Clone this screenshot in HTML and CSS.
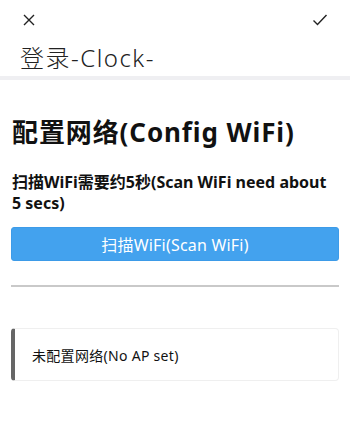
FILE: index.html
```html
<!DOCTYPE html>
<html lang="zh">
<head>
<meta charset="utf-8">
<link rel="stylesheet" href="styles.css">
</head>
<body>
<header class="app-header">
  <div class="toolbar">
    <svg class="icon" width="14" height="14" viewBox="0 0 14 14"><path d="M2 2 L12 12 M12 2 L2 12" stroke="#222" stroke-width="1.4" fill="none"/></svg>
    <svg class="icon" width="16" height="14" viewBox="0 0 16 14"><path d="M1.5 7.5 L5.5 11.5 L14.5 2" stroke="#222" stroke-width="1.4" fill="none"/></svg>
  </div>
  <div class="title">登录-Clock-</div>
</header>
<div class="header-bar"></div>
<main class="content">
  <h1 class="heading">配置网络(Config WiFi)</h1>
  <p class="hint">扫描WiFi需要约5秒(Scan WiFi need about 5 secs)</p>
  <button class="scan-btn">扫描WiFi(Scan WiFi)</button>
  <hr class="sep">
  <div class="notice">未配置网络(No AP set)</div>
</main>
</body>
</html>
```
FILE: styles.css
```css
* { box-sizing: border-box; }
body {
  margin: 0;
  background: #fff;
  font-family: "Noto Sans", "Noto Sans CJK SC", sans-serif;
  color: #111;
}
.toolbar {
  height: 40px;
  display: flex;
  align-items: center;
  justify-content: space-between;
  padding: 0 22px 0 22px;
}
.title {
  font-size: 24px;
  font-weight: 300;
  padding-left: 20px;
  line-height: 36px;
  letter-spacing: 1.5px;
  color: #222;
}
.header-bar {
  height: 4px;
  background: #efeff2;
}
.content {
  padding: 0 11px;
}
.heading {
  margin: 34px 0 0 1px;
  font-size: 26px;
  font-weight: 700;
  line-height: 36px;
  letter-spacing: 0.9px;
}
.hint {
  margin: 22px 0 0 1px;
  font-size: 16px;
  font-weight: 700;
  line-height: 21px;
}
.scan-btn {
  display: block;
  width: 100%;
  height: 34px;
  margin-top: 13px;
  border: 1px solid #3d9be8;
  border-radius: 3px;
  background: #43a2ee;
  color: #fff;
  font-family: inherit;
  font-size: 16px;
  letter-spacing: 0.2px;
}
.sep {
  margin: 24px 0 0;
  border: 0;
  height: 2px;
  background: #c9c9c9;
}
.notice {
  margin-top: 41px;
  height: 53px;
  display: flex;
  align-items: center;
  padding-left: 17px;
  font-size: 14px;
  letter-spacing: 0.3px;
  border: 1px solid #efefef;
  border-left: 4px solid #666;
  border-radius: 4px;
  color: #111;
}
```
